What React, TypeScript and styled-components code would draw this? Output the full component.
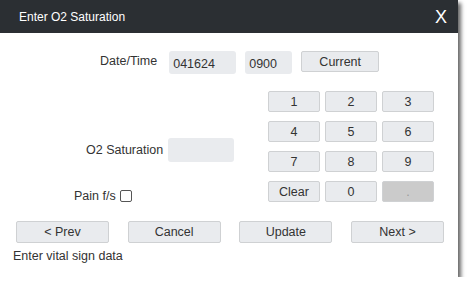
import React, { useState } from "react";
import styled, { createGlobalStyle } from "styled-components";

const GlobalStyle = createGlobalStyle`
    html, body {
        margin: 0;
        padding: 0;
        background: #ffffff;
        font-family: "Liberation Sans", Arial, sans-serif;
    }
`;

const Dialog = styled.div`
    width: 458px;
    height: 277px;
    background: #ffffff;
    box-shadow: 3px 3px 4px rgba(0, 0, 0, 0.6);
    display: flex;
    flex-direction: column;
    color: #333333;
    font-size: 12.5px;
`;

const Header = styled.div`
    height: 33px;
    background: #2b2f33;
    color: #ffffff;
    display: flex;
    align-items: center;
    justify-content: space-between;
    padding: 0 11px 0 19px;
`;

const Title = styled.div`
    font-size: 12px;
`;

const CloseX = styled.div`
    font-size: 18px;
    line-height: 1;
    cursor: pointer;
`;

const DateRow = styled.div`
    display: flex;
    align-items: flex-start;
    margin-top: 18px;
    padding-left: 100px;
`;

const Label = styled.div<{ $gap: number }>`
    margin-right: ${(p) => p.$gap}px;
    padding-top: 3px;
    white-space: nowrap;
`;

const Field = styled.div<{ $w: number; $h?: number }>`
    width: ${(p) => p.$w}px;
    height: ${(p) => p.$h ?? 23}px;
    margin-right: 9px;
    background: #e9ebee;
    border-radius: 3px;
    box-sizing: border-box;
    padding: 6px 4px 0;
    font-size: 12.5px;
    color: #333333;
`;

const Button = styled.button<{ $w: number; $disabled?: boolean }>`
    width: ${(p) => p.$w}px;
    height: 22px;
    padding: 0;
    border: 1px solid #cfd1d3;
    border-radius: 2px;
    background: ${(p) => (p.$disabled ? "#cbcbcb" : "#e9ebee")};
    color: ${(p) => (p.$disabled ? "#9a9a9a" : "#333333")};
    font-family: "Liberation Sans", Arial, sans-serif;
    font-size: 12.5px;
    cursor: pointer;
`;

const Middle = styled.div`
    display: flex;
    margin-top: 17px;
`;

const LeftCol = styled.div`
    width: 268px;
    display: flex;
    flex-direction: column;
`;

const SatRow = styled.div`
    display: flex;
    align-items: center;
    margin-top: 47px;
    padding-left: 86px;
`;

const PainRow = styled.div`
    display: flex;
    align-items: center;
    margin-top: 27px;
    padding-left: 74px;
`;

const Check = styled.span`
    display: inline-block;
    width: 10px;
    height: 10px;
    margin-left: 4px;
    border: 1px solid #555555;
    border-radius: 2px;
`;

const Keypad = styled.div`
    display: grid;
    grid-template-columns: repeat(3, 52px);
    grid-auto-rows: 21px;
    column-gap: 5px;
    row-gap: 9px;
`;

const KeyButton = styled(Button)`
    width: 52px;
    height: 21px;
`;

const NavRow = styled.div`
    display: flex;
    justify-content: space-between;
    padding: 0 14px 0 16px;
    margin-top: 18px;
`;

const Status = styled.div`
    padding-left: 13px;
    margin-top: 6px;
`;

const keys = ["1", "2", "3", "4", "5", "6", "7", "8", "9", "Clear", "0", "."];

export default function App() {
    const [pain, setPain] = useState(false);

    return (
        <>
            <GlobalStyle />
            <Dialog>
                <Header>
                    <Title>Enter O2 Saturation</Title>
                    <CloseX>X</CloseX>
                </Header>
                <DateRow>
                    <Label $gap={12}>Date/Time</Label>
                    <Field $w={67}>041624</Field>
                    <Field $w={47}>0900</Field>
                    <Button $w={78} style={{ height: 21 }}>
                        Current
                    </Button>
                </DateRow>
                <Middle>
                    <LeftCol>
                        <SatRow>
                            <Label $gap={5} style={{ paddingTop: 0 }}>
                                O2 Saturation
                            </Label>
                            <Field $w={66} $h={24} />
                        </SatRow>
                        <PainRow onClick={() => setPain(!pain)}>
                            Pain f/s
                            <Check />
                        </PainRow>
                    </LeftCol>
                    <Keypad>
                        {keys.map((k) => (
                            <KeyButton key={k} $w={52} $disabled={k === "."}>
                                {k}
                            </KeyButton>
                        ))}
                    </Keypad>
                </Middle>
                <NavRow>
                    <Button $w={93}>&lt; Prev</Button>
                    <Button $w={93}>Cancel</Button>
                    <Button $w={93}>Update</Button>
                    <Button $w={93}>Next &gt;</Button>
                </NavRow>
                <Status>Enter vital sign data</Status>
            </Dialog>
        </>
    );
}
